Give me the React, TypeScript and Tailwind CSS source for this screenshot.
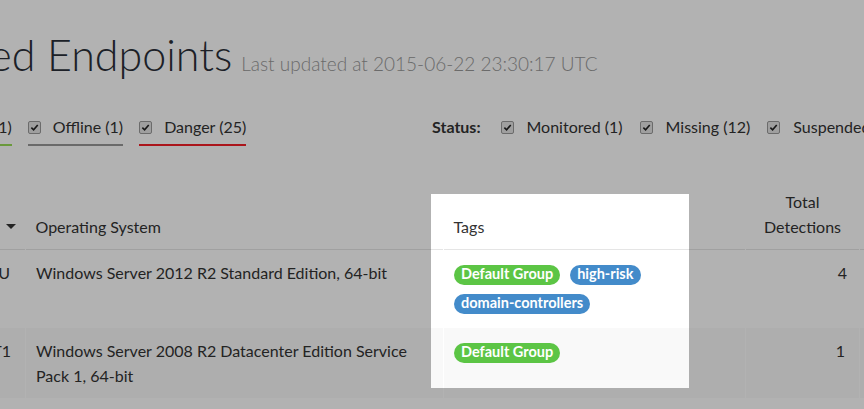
import React from 'react'

const font = { fontFamily: 'Lato, "Liberation Sans", sans-serif' }

function Check() {
  return (
    <span className="inline-flex h-[13px] w-[13px] shrink-0 items-center justify-center rounded-[2px] border border-[#9a9a9a] bg-[#e4e4e4]">
      <svg viewBox="0 0 10 10" className="h-[9px] w-[9px]">
        <path d="M1.5 5.2 L4 7.6 L8.6 2.2" fill="none" stroke="#222" strokeWidth="1.8" />
      </svg>
    </span>
  )
}

function Filter({ label, line }: { label: string; line: string }) {
  return (
    <label className={`flex items-center gap-[12px] border-b-2 pb-[5px] ${line}`}>
      <Check />
      <span>{label}</span>
    </label>
  )
}

function StatusItem({ label }: { label: string }) {
  return (
    <label className="flex items-center gap-[13px]">
      <Check />
      <span>{label}</span>
    </label>
  )
}

function Pill({ children, blue }: { children: React.ReactNode; blue?: boolean }) {
  return (
    <span
      className={`inline-flex h-[20px] items-center rounded-full px-[7px] text-[14.5px] font-bold leading-none text-white ${
        blue ? 'bg-[#438bca]' : 'bg-[#5cc545]'
      }`}
    >
      {children}
    </span>
  )
}

export default function App() {
  return (
    <div className="relative h-[409px] w-[864px] overflow-hidden bg-white text-[16px] text-[#333]" style={font}>
      {/* page heading */}
      <div className="ml-[-136px] flex items-baseline gap-[9px] whitespace-nowrap pt-[29px]">
        <h1 className="text-[43px] font-light leading-[52px] text-[#2a2f38]">Managed Endpoints</h1>
        <span className="text-[19px] font-light text-[#999]">Last updated at 2015-06-22 23:30:17 UTC</span>
      </div>

      {/* filters */}
      <div className="mt-[34px] flex items-start whitespace-nowrap">
        <div className="ml-[-91px] flex w-[523px] shrink-0 gap-[16px]">
          <Filter label="Online (11)" line="border-[#99dc56]" />
          <Filter label="Offline (1)" line="border-[#999]" />
          <Filter label="Danger (25)" line="border-[#f51f28]" />
        </div>
        <div className="flex items-center gap-[17px]">
          <span className="mr-[3px] font-bold">Status:</span>
          <StatusItem label="Monitored (1)" />
          <StatusItem label="Missing (12)" />
          <StatusItem label="Suspended (0)" />
        </div>
      </div>

      {/* endpoints table */}
      <table className="ml-[-200px] mt-[43px] w-[1209px] table-fixed border-collapse leading-[25px]">
        <colgroup>
          <col className="w-[225px]" />
          <col className="w-[418px]" />
          <col className="w-[302px]" />
          <col className="w-[114px]" />
          <col className="w-[150px]" />
        </colgroup>
        <thead>
          <tr className="border-b border-[#e5e5e5] align-bottom">
            <th className="px-[10px] pb-[10px] pt-[10px] text-left font-normal">
              <div className="flex items-center justify-between">
                <span>Hostname</span>
                <span className="h-0 w-0 border-x-[5px] border-t-[5px] border-x-transparent border-t-[#333]" />
              </div>
            </th>
            <th className="px-[10px] pb-[10px] text-left font-normal">Operating System</th>
            <th className="px-[10px] pb-[10px] text-left font-normal">Tags</th>
            <th className="px-[10px] pb-[10px] text-center font-normal">Total Detections</th>
            <th className="px-[10px] pb-[10px] text-left font-normal">Last Seen</th>
          </tr>
        </thead>
        <tbody>
          <tr className="align-top">
            <td className="border-x border-white py-[10px] pr-[15px] text-right">DC01-PRODSRV-U</td>
            <td className="border-x border-white px-[10px] py-[10px]">Windows Server 2012 R2 Standard Edition, 64-bit</td>
            <td className="border-x border-white px-[10px] py-[10px]">
              <div className="flex flex-wrap gap-x-[10px] leading-[29px]">
                <span className="flex h-[29px] items-center"><Pill>Default Group</Pill></span>
                <span className="flex h-[29px] items-center"><Pill blue>high-risk</Pill></span>
                <span className="flex h-[29px] items-center"><Pill blue>domain-controllers</Pill></span>
              </div>
            </td>
            <td className="border-x border-white py-[10px] pr-[12px] text-right">4</td>
            <td className="border-x border-white px-[10px] py-[10px]">2 hours ago</td>
          </tr>
          <tr className="bg-[#f9f9f9] align-top">
            <td className="border-x border-white py-[10px] pr-[14px] text-right">SQL-CLUSTER-T1</td>
            <td className="border-x border-white px-[10px] py-[10px]">
              Windows Server 2008 R2 Datacenter Edition Service Pack 1, 64-bit
            </td>
            <td className="border-x border-white px-[10px] py-[10px]">
              <span className="flex h-[29px] items-center"><Pill>Default Group</Pill></span>
            </td>
            <td className="border-x border-white py-[10px] pr-[14px] text-right">1</td>
            <td className="border-x border-white px-[10px] py-[10px]">5 hours ago</td>
          </tr>
          <tr>
            <td className="border-x border-white py-[10px]">&nbsp;</td>
            <td className="border-x border-white py-[10px]" />
            <td className="border-x border-white py-[10px]" />
            <td className="border-x border-white py-[10px]" />
            <td className="border-x border-white py-[10px]" />
          </tr>
        </tbody>
      </table>

      {/* tour spotlight over the Tags column */}
      <div className="pointer-events-none absolute left-[431px] top-[194px] h-[194px] w-[258px] shadow-[0_0_0_2000px_rgba(0,0,0,0.3)]" />
    </div>
  )
}
